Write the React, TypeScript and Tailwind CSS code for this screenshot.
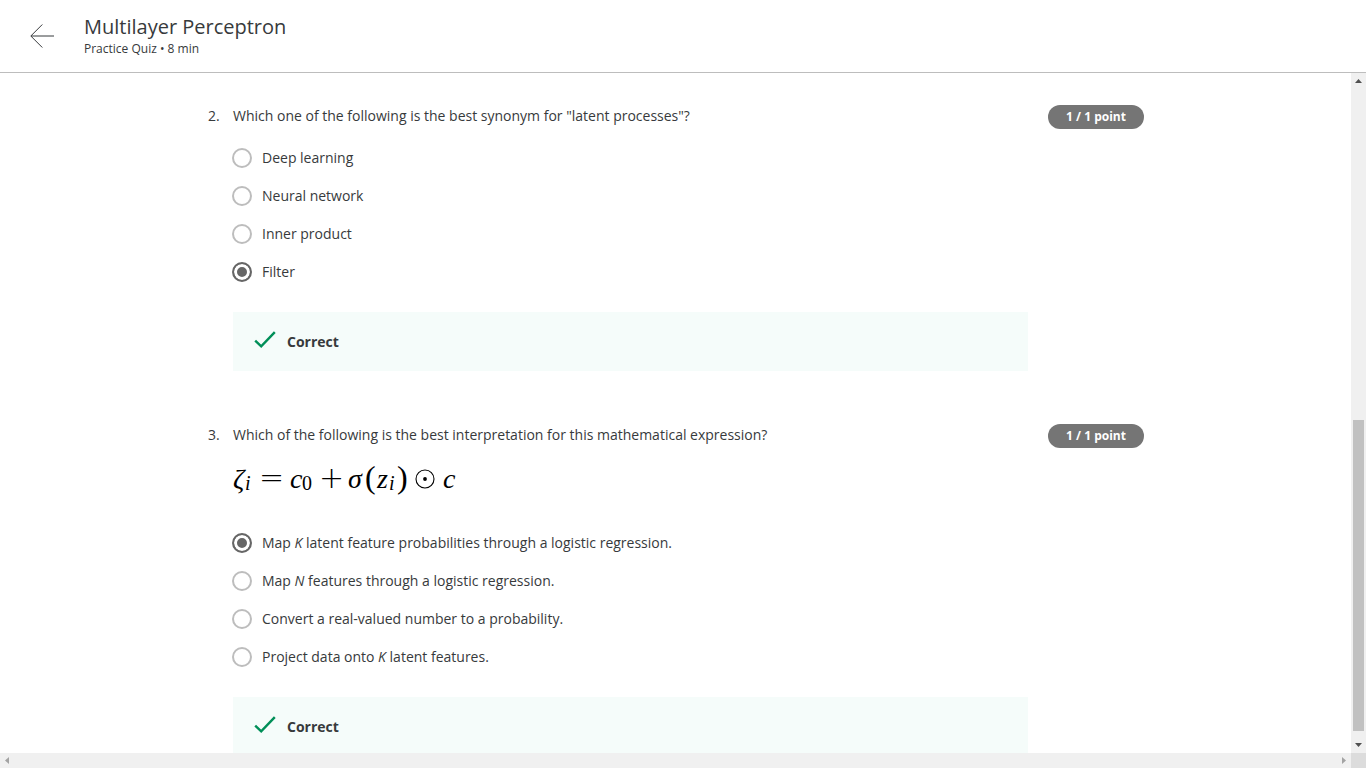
import type { ReactNode } from "react";

type Option = { id: string; label: ReactNode };

type QuestionProps = {
  number: number;
  prompt: string;
  options: Option[];
  selected: string;
  children?: ReactNode;
};

function BackArrow() {
  return (
    <svg width="24" height="24" viewBox="0 0 24 24" fill="none" stroke="#373a3c" strokeWidth="1" aria-hidden="true">
      <path d="M24 12H1M12.3 0.5L0.8 12L12.3 23.5" />
    </svg>
  );
}

function CheckMark() {
  return (
    <svg width="22" height="18" viewBox="0 0 22 18" fill="none" stroke="#008f58" strokeWidth="2.4" aria-hidden="true">
      <path d="M1.2 9.6L7.2 15.4L20.8 1.2" />
    </svg>
  );
}

function CircledDot() {
  return (
    <svg width="20" height="20" viewBox="0 0 20 20" fill="none" stroke="#000" strokeWidth="1.1" role="img" aria-label="⊙">
      <circle cx="10" cy="10" r="9" />
      <circle cx="10" cy="10" r="1.9" fill="#000" stroke="none" />
    </svg>
  );
}

function Formula() {
  return (
    <div
      aria-label="Mathematical expression"
      className="flex h-8 items-baseline font-['Liberation_Serif',serif] text-[28px] leading-8 text-black"
    >
      <span className="w-3 italic">ζ</span>
      <sub className="bottom-0 w-2 translate-y-0.5 text-xl leading-none italic">i</sub>
      <span className="ml-[6px] w-6 text-center font-['DejaVu_Sans',sans-serif] text-[30px] font-extralight">=</span>
      <span className="ml-[7px] w-3 italic">c</span>
      <sub className="bottom-0 translate-y-0.5 text-xl leading-none">0</sub>
      <span className="ml-[7px] w-6 text-center font-['DejaVu_Sans',sans-serif] text-[30px] font-extralight">+</span>
      <span className="ml-[5px] w-[17px] italic">σ</span>
      <span className="w-3 text-[32px]">(</span>
      <span className="w-3 italic">z</span>
      <sub className="bottom-0 w-2 translate-y-0.5 text-xl leading-none italic">i</sub>
      <span className="w-3 text-[32px]">)</span>
      <span className="ml-[6px] flex self-center pt-1">
        <CircledDot />
      </span>
      <span className="ml-2 italic">c</span>
    </div>
  );
}

function Question({ number, prompt, options, selected, children }: QuestionProps) {
  const name = `question-${number}`;
  return (
    <section className="flex items-start">
      <div className="w-[26px] shrink-0 pl-px leading-[22px]">{number}.</div>
      <fieldset className="min-w-0 flex-1">
        <legend className="leading-[22px]">{prompt}</legend>
        {children}
        <div className="mt-[21px] flex flex-col gap-[18px]">
          {options.map((option) => (
            <label key={option.id} className="-ml-px flex items-center gap-[10px] leading-5">
              <input
                type="radio"
                name={name}
                value={option.id}
                defaultChecked={option.id === selected}
                className="size-5 shrink-0 appearance-none rounded-full border-2 border-[#bdbdbd] bg-white checked:border-[#666] checked:bg-[#666] checked:shadow-[inset_0_0_0_3px_#fff]"
              />
              <span>{option.label}</span>
            </label>
          ))}
        </div>
        <div className="mt-[30px] flex h-[59px] items-center gap-[11px] bg-[#f5fcfa] pl-[21px] font-bold" role="status">
          <span className="pb-1">
            <CheckMark />
          </span>
          <span>Correct</span>
        </div>
      </fieldset>
      <div className="ml-5 w-24 shrink-0 rounded-full bg-[#757575] text-center text-xs leading-6 font-bold text-white">
        1 / 1 point
      </div>
    </section>
  );
}

function VerticalScrollbar() {
  return (
    <div className="flex w-[15px] shrink-0 flex-col items-center bg-[#f0f0f0]" aria-hidden="true">
      <svg width="15" height="17" viewBox="0 0 15 17" fill="#505050">
        <path d="M4 10h7L7.5 6z" />
      </svg>
      <div className="grow-[330]" />
      <div className="w-[11px] grow-[311] bg-[#c1c1c1]" />
      <div className="grow-[5]" />
      <svg width="15" height="17" viewBox="0 0 15 17" fill="#505050">
        <path d="M4 7h7L7.5 11z" />
      </svg>
    </div>
  );
}

function HorizontalScrollbar() {
  return (
    <div className="flex h-[15px] shrink-0 bg-[#f0f0f0]" aria-hidden="true">
      <svg width="15" height="15" viewBox="0 0 15 15" fill="#a3a3a3">
        <path d="M9 4v7L5 7.5z" />
      </svg>
      <div className="flex-1" />
      <svg width="15" height="15" viewBox="0 0 15 15" fill="#a3a3a3">
        <path d="M6 4v7l4-3.5z" />
      </svg>
      <div className="w-[15px] bg-[#dcdcdc]" />
    </div>
  );
}

export default function App() {
  return (
    <div className="flex h-screen flex-col bg-white font-['Open_Sans','Noto_Sans',sans-serif] text-sm text-[#373a3c]">
      <header className="flex h-[73px] shrink-0 items-center gap-[30px] border-b border-[#bdbdbd] pl-[30px]">
        <button type="button" aria-label="Back">
          <BackArrow />
        </button>
        <div>
          <h1 className="text-xl leading-[26px]">Multilayer Perceptron</h1>
          <p className="text-xs leading-[18px]">Practice Quiz • 8 min</p>
        </div>
      </header>
      <div className="flex min-h-0 flex-1">
        <main className="min-w-0 flex-1 overflow-hidden">
          <div className="mx-auto flex max-w-[937px] flex-col gap-[53px] pt-8">
            <Question
              number={2}
              prompt={'Which one of the following is the best synonym for "latent processes"?'}
              selected="filter"
              options={[
                { id: "deep", label: "Deep learning" },
                { id: "neural", label: "Neural network" },
                { id: "inner", label: "Inner product" },
                { id: "filter", label: "Filter" },
              ]}
            />
            <Question
              number={3}
              prompt="Which of the following is the best interpretation for this mathematical expression?"
              selected="map-k"
              options={[
                { id: "map-k", label: <>Map <i>K</i> latent feature probabilities through a logistic regression.</> },
                { id: "map-n", label: <>Map <i>N</i> features through a logistic regression.</> },
                { id: "convert", label: "Convert a real-valued number to a probability." },
                { id: "project", label: <>Project data onto <i>K</i> latent features.</> },
              ]}
            >
              <div className="pt-[15px] pb-[19px]">
                <Formula />
              </div>
            </Question>
          </div>
        </main>
        <VerticalScrollbar />
      </div>
      <HorizontalScrollbar />
    </div>
  );
}
